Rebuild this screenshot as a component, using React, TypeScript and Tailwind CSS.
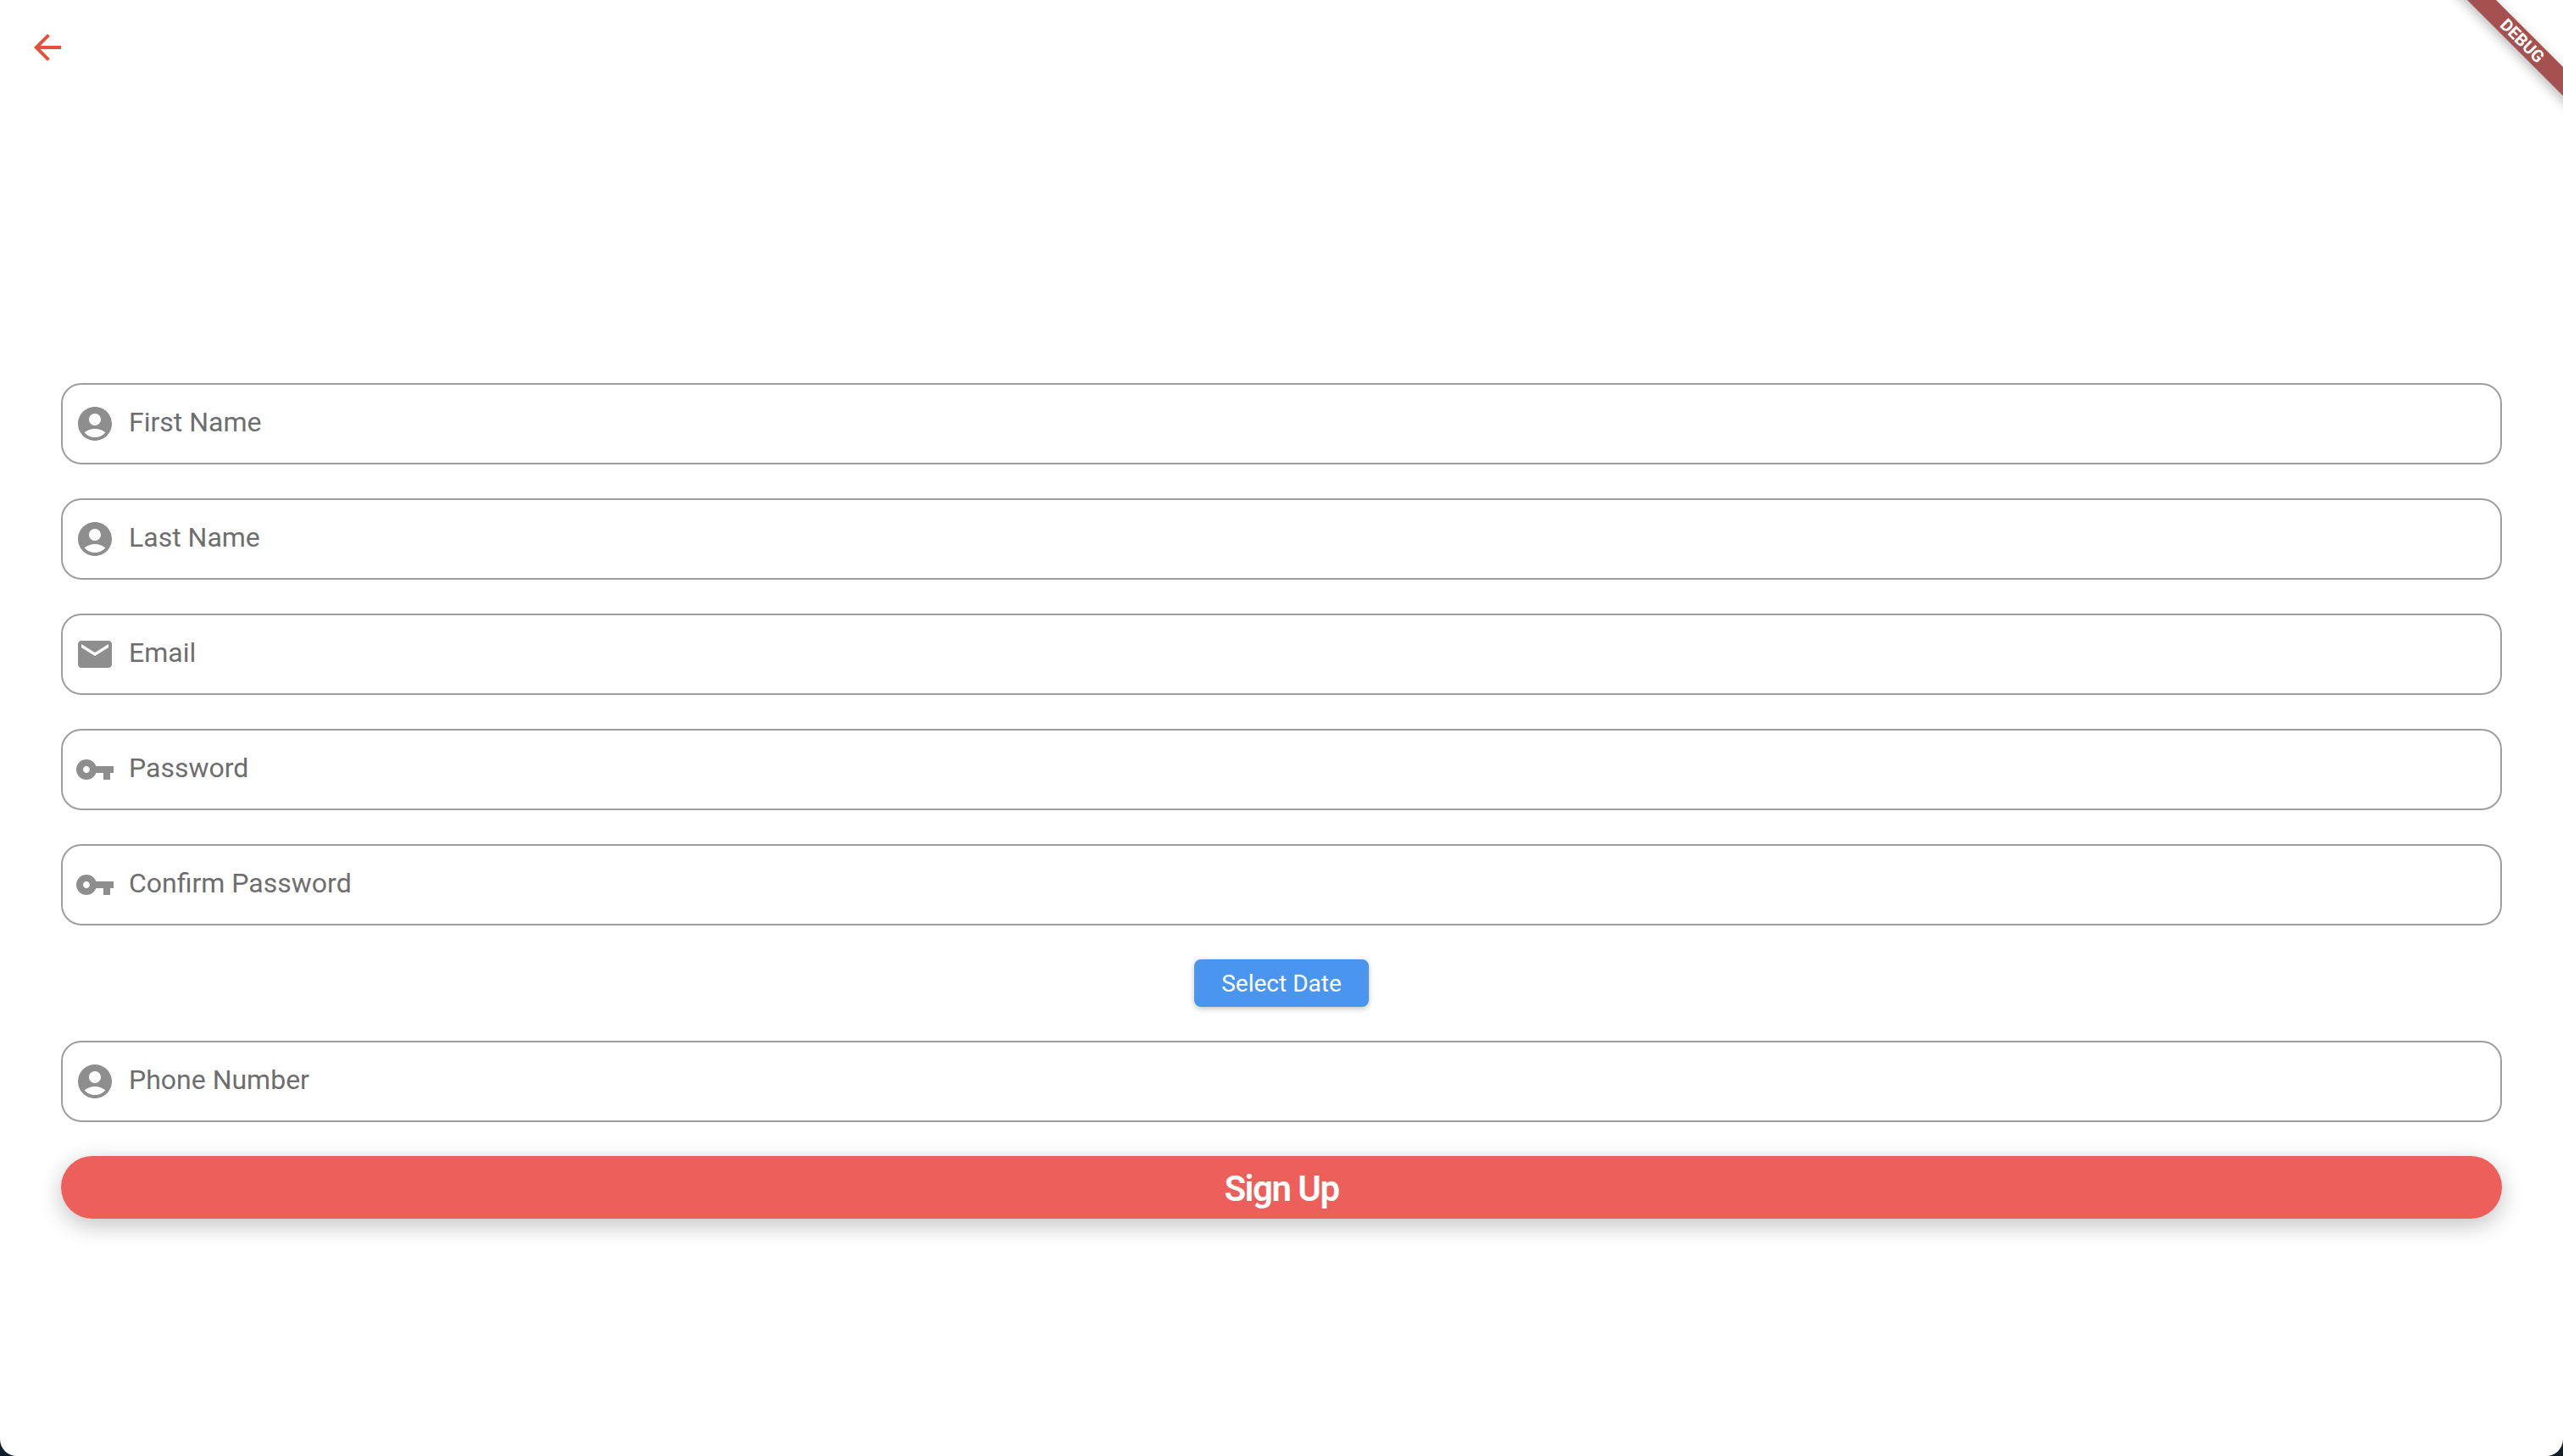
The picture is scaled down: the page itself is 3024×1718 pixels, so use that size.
import React from "react";

const ICON_COLOR = "#8e8e8e";

function PersonIcon() {
  return (
    <svg viewBox="0 0 24 24" className="h-12 w-12 shrink-0" fill={ICON_COLOR}>
      <path d="M12 2C6.48 2 2 6.48 2 12s4.48 10 10 10 10-4.48 10-10S17.52 2 12 2zm0 4c1.93 0 3.5 1.57 3.5 3.5S13.93 13 12 13s-3.5-1.57-3.5-3.5S10.07 6 12 6zm0 14c-2.03 0-4.43-.82-6.14-2.88C7.55 15.8 9.68 15 12 15s4.45.8 6.14 2.12C16.43 19.18 14.03 20 12 20z" />
    </svg>
  );
}

function MailIcon() {
  return (
    <svg viewBox="0 0 24 24" className="h-12 w-12 shrink-0" fill={ICON_COLOR}>
      <path d="M20 4H4c-1.1 0-1.99.9-1.99 2L2 18c0 1.1.9 2 2 2h16c1.1 0 2-.9 2-2V6c0-1.1-.9-2-2-2zm0 4l-8 5-8-5V6l8 5 8-5v2z" />
    </svg>
  );
}

function KeyIcon() {
  return (
    <svg viewBox="0 0 24 24" className="h-12 w-12 shrink-0" fill={ICON_COLOR}>
      <path d="M12.65 10C11.83 7.67 9.61 6 7 6c-3.31 0-6 2.69-6 6s2.69 6 6 6c2.61 0 4.83-1.67 5.65-4H17v4h4v-4h2v-4H12.65zM7 14c-1.1 0-2-.9-2-2s.9-2 2-2 2 .9 2 2-.9 2-2 2z" />
    </svg>
  );
}

function Field({ icon, label }: { icon: React.ReactNode; label: string }) {
  return (
    <label className="flex h-[96px] w-full items-center gap-[16px] rounded-[24px] border-2 border-[#9e9e9e] bg-white pl-[14px] pr-6">
      {icon}
      <input
        placeholder={label}
        className="h-full min-w-0 flex-1 bg-transparent pb-[5px] text-[32px] text-[#6e6e6e] outline-none placeholder:text-[#6e6e6e]"
      />
    </label>
  );
}

export default function App() {
  return (
    <div className="h-[1718px] w-[3024px] overflow-hidden bg-[#0f1f2b] font-['Roboto',sans-serif]">
      <div className="relative h-full w-full overflow-hidden rounded-b-[20px] bg-white">
        <header className="flex h-[120px] items-start pl-[32px] pt-[32px]">
          <button aria-label="Back" className="h-12 w-12">
            <svg viewBox="0 0 24 24" className="h-12 w-12" fill="#e4513f">
              <path d="M20 11H7.83l5.59-5.59L12 4l-8 8 8 8 1.41-1.41L7.83 13H20v-2z" />
            </svg>
          </button>
        </header>

        <main className="flex flex-col items-center gap-[40px] px-[72px] pt-[332px]">
          <Field icon={<PersonIcon />} label="First Name" />
          <Field icon={<PersonIcon />} label="Last Name" />
          <Field icon={<MailIcon />} label="Email" />
          <Field icon={<KeyIcon />} label="Password" />
          <Field icon={<KeyIcon />} label="Confirm Password" />
          <button className="h-[56px] w-[206px] rounded-[8px] bg-[#4a96ee] pt-[1px] text-[28px] font-normal text-white shadow-[0_2px_6px_rgba(0,0,0,0.25)]">
            Select Date
          </button>
          <Field icon={<PersonIcon />} label="Phone Number" />
          <button className="h-[74px] w-full rounded-[37px] bg-[#ed5f5a] pt-[2px] text-[42px] font-semibold tracking-[-1.5px] text-white shadow-[0_8px_28px_rgba(0,0,0,0.24)]">
            Sign Up
          </button>
        </main>

        <div className="absolute left-[2826px] top-[36px] flex h-[24px] w-[300px] rotate-45 items-center justify-center bg-[#a5514f] text-[20px] font-bold text-white shadow-[0_4px_14px_rgba(0,0,0,0.28)]">
          DEBUG
        </div>
      </div>
    </div>
  );
}
